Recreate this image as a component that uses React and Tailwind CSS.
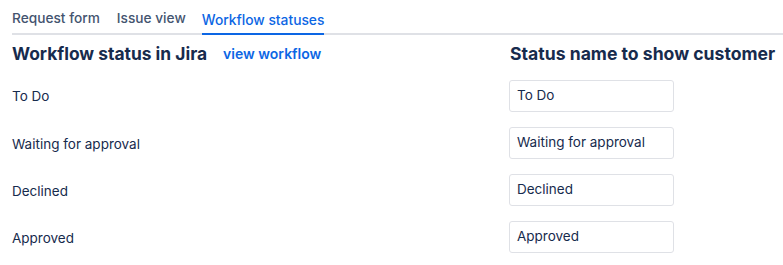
export default function App() {
  const rows = ["To Do", "Waiting for approval", "Declined", "Approved"];
  return (
    <div className="w-[783px] h-[265px] bg-white pl-[12px] font-['Inter',sans-serif] text-[#172b4d] overflow-hidden">
      <div className="flex items-end gap-[16px] h-[35px] border-b-2 border-[#dfe1e6] pt-[9px]">
        <div className="text-[13.7px] text-[#44546f] font-medium pb-[6px] leading-[18px]">Request form</div>
        <div className="text-[13.7px] text-[#44546f] font-medium pb-[6px] leading-[18px] ml-[1px]">Issue view</div>
        <div className="text-[13.8px] text-[#0c66e4] font-medium pb-[4px] leading-[18px] border-b-2 border-[#0c66e4] -mb-[2px]">Workflow statuses</div>
      </div>
      <div className="flex">
        <div className="w-[497px]">
          <div className="flex items-center h-[36px] mt-[1px] gap-[16px]">
            <div className="text-[17.4px] font-bold leading-[20px]">Workflow status in Jira</div>
            <div className="text-[14px] font-semibold text-[#0c66e4] leading-[18px]">view workflow</div>
          </div>
          {rows.map((r, i) => (
            <div key={r} className={i === 0 ? "h-[47px] flex items-center text-[13.5px] pt-[2px]" : "h-[47px] flex items-center text-[13.5px] pt-[4px]"}>{r}</div>
          ))}
        </div>
        <div>
          <div className="flex items-center h-[36px] mt-[1px]">
            <div className="text-[17.6px] font-bold leading-[20px] pl-[1px]">Status name to show customer</div>
          </div>
          {rows.map((r) => (
            <div key={r} className="h-[47px] flex items-center">
              <div className="w-[165px] h-[32px] border border-[#dfe1e6] rounded-[3px] flex items-center pl-[7px] text-[13.5px]">{r}</div>
            </div>
          ))}
        </div>
      </div>
    </div>
  );
}
